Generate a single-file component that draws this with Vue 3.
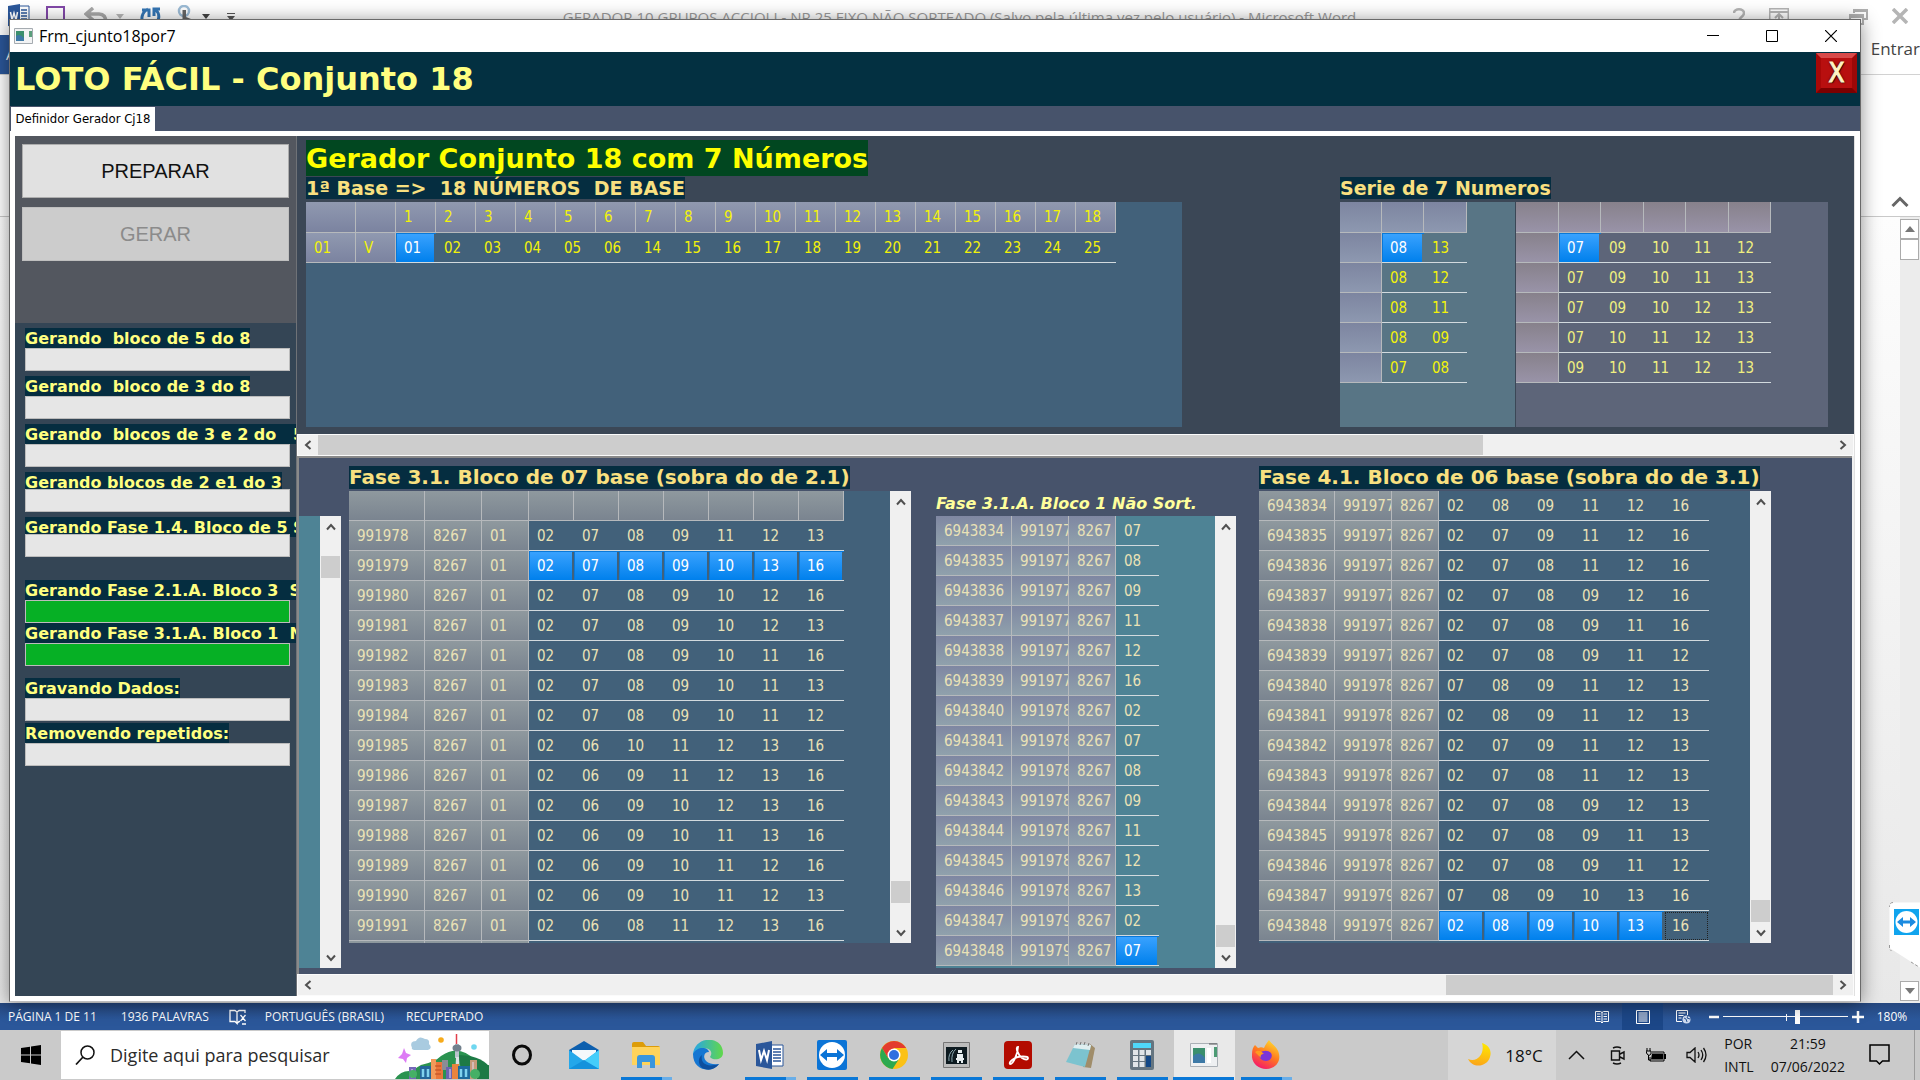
<script setup>
const baseTitle = '1ª Base =>  18 NÚMEROS  DE BASE'
const baseHead = ['', '', ...Array.from({ length: 18 }, (_, i) => String(i + 1))]
const baseRow = '01 02 03 04 05 06 14 15 16 17 18 19 20 21 22 23 24 25'.split(' ')

const split = (lines) => lines.map((line) => line.split(' '))

const pairs = split(['08 13', '08 12', '08 11', '08 09', '07 08'])
const quintets = split([
  '07 09 10 11 12',
  '07 09 10 11 13',
  '07 09 10 12 13',
  '07 10 11 12 13',
  '09 10 11 12 13',
])

const block7 = split([
  '02 07 08 09 11 12 13',
  '02 07 08 09 10 13 16',
  '02 07 08 09 10 12 16',
  '02 07 08 09 10 12 13',
  '02 07 08 09 10 11 16',
  '02 07 08 09 10 11 13',
  '02 07 08 09 10 11 12',
  '02 06 10 11 12 13 16',
  '02 06 09 11 12 13 16',
  '02 06 09 10 12 13 16',
  '02 06 09 10 11 13 16',
  '02 06 09 10 11 12 16',
  '02 06 09 10 11 12 13',
  '02 06 08 11 12 13 16',
]).map((cells, i) => ({ id: 991978 + i, cells }))

const parentOf = (i) => (i < 6 ? 991977 : i < 13 ? 991978 : 991979)

const block1 = '07 08 09 11 12 16 02 07 08 09 11 12 13 02 07'
  .split(' ')
  .map((cell, i) => ({ id: 6943834 + i, parent: parentOf(i), cell }))

const block6 = split([
  '02 08 09 11 12 16',
  '02 07 09 11 12 16',
  '02 07 08 11 12 16',
  '02 07 08 09 12 16',
  '02 07 08 09 11 16',
  '02 07 08 09 11 12',
  '07 08 09 11 12 13',
  '02 08 09 11 12 13',
  '02 07 09 11 12 13',
  '02 07 08 11 12 13',
  '02 07 08 09 12 13',
  '02 07 08 09 11 13',
  '02 07 08 09 11 12',
  '07 08 09 10 13 16',
  '02 08 09 10 13 16',
]).map((cells, i) => ({ id: 6943834 + i, parent: parentOf(i), cells }))

const groups = [
  {
    cls: 'spaced',
    fields: [
      { label: 'Gerando  bloco de 5 do 8', value: 0 },
      { label: 'Gerando  bloco de 3 do 8', value: 0 },
      { label: 'Gerando  blocos de 3 e 2 do   5', value: 0 },
      { label: 'Gerando blocos de 2 e1 do 3', value: 0, tight: true },
      { label: 'Gerando Fase 1.4. Bloco de 5 S', value: 0, tight: true },
    ],
  },
  {
    cls: 'joined',
    fields: [
      { label: 'Gerando Fase 2.1.A. Bloco 3  S', value: 100 },
      { label: 'Gerando Fase 3.1.A. Bloco 1  N', value: 100 },
    ],
  },
  {
    cls: 'final',
    fields: [
      { label: 'Gravando Dados:', value: 0 },
      { label: 'Removendo repetidos:', value: 0 },
    ],
  },
]
</script>

<template>
  <div class="desktop">
    <div class="word">
      <header class="word-title">
        <div class="quick">
          <svg width="22" height="24" viewBox="0 0 22 24"><path d="M10 2h11v20H10z" fill="#fff" stroke="#2b579a"/><path d="M13 6h6M13 9h6M13 12h6M13 15h6" stroke="#2b579a" stroke-width="1.5"/><path d="M0 2l12-2v24L0 22z" fill="#2b579a"/><path d="M2.500 8l1.500 8 2-7 2 7 1.500-8" fill="none" stroke="#fff" stroke-width="1.500"/></svg>
          <svg class="q-save" width="20" height="20" viewBox="0 0 20 20"><path d="M1 1h17v17H1z" fill="#fff" stroke="#8248a8" stroke-width="2"/><path d="M5 13h10v5H5z" fill="#8248a8"/></svg>
          <svg class="q-undo" width="24" height="20" viewBox="0 0 24 20"><path d="M9 1L2 7l7 6M3 7h12c5 0 7 4 7 9" fill="none" stroke="#a9a9a9" stroke-width="3.500"/></svg>
          <svg class="q-tri" width="8" height="5" viewBox="0 0 8 5"><path d="M0 0h8L4 5z" fill="#b9b9b9"/></svg>
          <svg class="q-redo" width="22" height="20" viewBox="0 0 22 20"><path d="M8 2C2 5 0 12 4 18M14 18c6-4 6-11 2-15M2 3h7v7M20 2h-6v7" fill="none" stroke="#3576b5" stroke-width="3"/></svg>
          <svg class="q-touch" width="16" height="20" viewBox="0 0 16 20"><circle cx="8" cy="6" r="5" fill="none" stroke="#9dbcd6" stroke-width="2.500"/><path d="M6.500 5h3.500v7l5 2v6H4l-4-5 2-1 4.500 2z" fill="#666"/></svg>
          <svg class="q-tri2" width="8" height="5" viewBox="0 0 8 5"><path d="M0 0h8L4 5z" fill="#444"/></svg>
          <svg class="q-more" width="8" height="8" viewBox="0 0 8 8"><path d="M0 .500h8" stroke="#555"/><path d="M0 3h8L4 8z" fill="#555"/></svg>
        </div>
        <span class="word-name">GERADOR 10 GRUPOS ACCIOLI - NR 25 FIXO NÃO SORTEADO (Salvo pela última vez pelo usuário) - Microsoft Word</span>
        <div class="word-ctl">
          <svg width="12" height="20" viewBox="0 0 12 20"><path d="M1 5c0-5 10-5 10 0 0 4-5 4-5 8M6 15v3" fill="none" stroke="#b5b5b5" stroke-width="2.500"/></svg>
          <svg width="20" height="16" viewBox="0 0 20 16"><path d="M.500.500h19v15H.500zM0 4h20M10 6v9M6 10l4-4 4 4" fill="none" stroke="#b5b5b5" stroke-width="2"/></svg>
          <svg class="w-restore" width="19" height="18" viewBox="0 0 19 18"><path d="M5 5V2h13v9h-4M1 7h13v9H1zM1 9h13M5 3h13" fill="none" stroke="#b0b0b0" stroke-width="2"/></svg>
          <svg width="16" height="16" viewBox="0 0 16 16"><path d="M1 1l14 14M15 1L1 15" stroke="#b5b5b5" stroke-width="3.500"/></svg>
        </div>
      </header>
      <div class="word-tabs">
        <button class="file-tab">ARQUIVO</button>
        <a href="#" class="signin">Entrar</a>
      </div>
      <div class="ribbon">
        <svg width="18" height="11" viewBox="0 0 18 11"><path d="M1.500 10L9 2.500 16.500 10" fill="none" stroke="#666" stroke-width="3"/></svg>
      </div>
      <div class="doc">
        <div class="doc-bar">
          <button aria-label="Rolar para cima"><svg width="10" height="6" viewBox="0 0 10 6"><path d="M0 6l5-6 5 6z" fill="#777"/></svg></button>
          <div class="doc-thumb"></div>
          <button class="doc-down" aria-label="Rolar para baixo"><svg width="10" height="6" viewBox="0 0 10 6"><path d="M0 0l5 6 5-6z" fill="#777"/></svg></button>
        </div>
      </div>
    </div>

    <div class="viewer-tab">
      <svg width="31" height="66" viewBox="0 0 31 66"><path d="M31 .500H5Q.500.500.500 5v41L31 65.500z" fill="#fff"/><path d="M4 .500Q.500.500.500 5M.500 43v4l2 2M22 60l8 5" fill="none" stroke="#999" stroke-dasharray="3 2"/><path d="M5 7h25v26H5z" fill="#10a4ee"/><circle cx="17.500" cy="20" r="11" fill="#fff"/><path d="M8 20l6-5v3.500h7V15l6 5-6 5v-3.500h-7V25z" fill="#1c8be0"/></svg>
    </div>

    <footer class="status">
      <span>PÁGINA 1 DE 11</span>
      <span class="s-words">1936 PALAVRAS</span>
      <svg width="18" height="16" viewBox="0 0 18 16"><path d="M8 14.500V3L6 1.500H1v11h5zm0 0l2-2h1M8 3l2-1.500h6V4M11.500 6l5 6m0-6l-5 6M13 15h4" fill="none" stroke="#fff" stroke-width="1.300"/></svg>
      <span class="s-lang">PORTUGUÊS (BRASIL)</span>
      <span>RECUPERADO</span>
      <div class="s-right">
        <button class="s-view" aria-label="Modo de leitura"><svg width="14" height="14" viewBox="0 0 14 14"><path d="M.500 1.500h5l1.500 1 1.500-1h5v10h-5L7 13l-1.500-1.500h-5zM7 2v11M2 4h3.500M2 6.500h3.500M2 9h3.500M8.500 4H12M8.500 6.500H12M8.500 9H12" fill="none" stroke="#fff"/></svg></button>
        <button class="s-view on" aria-label="Layout de impressão"><svg width="14" height="14" viewBox="0 0 14 14"><path d="M.500.500h13v13H.500zM2.500 3h9M2.500 5h9M2.500 7h9M2.500 9h9M2.500 11h9" fill="none" stroke="#fff"/></svg></button>
        <button class="s-view" aria-label="Layout da Web"><svg width="15" height="14" viewBox="0 0 15 14"><path d="M6 11.500H.500V.500h11V5M2.500 3h7M2.500 5.500h5M2.500 8h3" fill="none" stroke="#fff"/><circle cx="10.500" cy="9.500" r="4" fill="#cfdcf0"/><path d="M8 8l2 1 1 3M12 6l-1 2 3 1" stroke="#2b579a" fill="none"/></svg></button>
        <button class="s-step minus" aria-label="Diminuir zoom"><svg width="10" height="12" viewBox="0 0 10 12"><path d="M0 6h10" stroke="#fff" stroke-width="2.500"/></svg></button>
        <div class="zoom"><input type="range" min="0" max="100" value="60" aria-label="Zoom" /></div>
        <button class="s-step" aria-label="Aumentar zoom"><svg width="12" height="12" viewBox="0 0 12 12"><path d="M0 6h12M6 0v12" stroke="#fff" stroke-width="2.500"/></svg></button>
        <span class="s-pct">180%</span>
      </div>
    </footer>

    <nav class="taskbar">
      <button class="start" aria-label="Iniciar"><svg width="20" height="20" viewBox="0 0 20 20"><path d="M0 3l9-1.300v7.800H0zM10 1.500L20 0v9.500H10zM0 10.500h9v7.800L0 17zM10 10.500h10V20l-10-1.500z" fill="#000"/></svg></button>
      <div class="search">
        <svg class="lens" width="20" height="20" viewBox="0 0 20 20"><circle cx="12.500" cy="7.500" r="6.500" fill="none" stroke="#111" stroke-width="1.500"/><path d="M8 12L1 19.500" stroke="#111" stroke-width="1.700"/></svg>
        <input type="text" placeholder="Digite aqui para pesquisar" aria-label="Pesquisar" />
        <svg width="94" height="48" viewBox="0 0 94 48">
          <path d="M0 48q6-9 16-8l10-6q14-3 20-9 18-12 34 4 8 6 14 5v14z" fill="#2a9350"/>
          <path d="M62 24q22 0 32 11v13H70z" fill="#1d7a45"/>
          <path d="M17 17q-3-7 4-7 3-6 9-2 5 0 4 5 4 4-1 6H19q-3-1-2-2z" fill="#a9cbe0"/>
          <circle cx="46" cy="9" r="2.800" fill="#f7ab1b"/><circle cx="79" cy="16" r="2.800" fill="#6fd7f0"/>
          <path d="M9 17l2 5 5 2-4 3-1 5-3-4-5-1 4-4z" fill="#dd7bf5"/>
          <path d="M61.500 3v10" stroke="#e23f4a" stroke-width="1.500"/><path d="M60 13h4v14h-4z" fill="#b7c3cc"/><ellipse cx="62" cy="17" rx="4.500" ry="3.500" fill="#71808d"/><path d="M61 26h3l1 22h-5z" fill="#dbe2e6"/>
          <path d="M14 36h7v12h-7z" fill="#7567b8"/><path d="M25 35h12v13H25z" fill="#23669a"/><path d="M38 31h10v17H38z" fill="#e9763b"/><path d="M36 28h5v20h-5z" fill="#f29a5a"/><path d="M47 29h6v10h-6z" fill="#8a8d96"/><path d="M51 36h8v12h-8z" fill="#6a64b0"/><path d="M57 33h7v15h-7z" fill="#e8843f"/><path d="M63 35h12v13H63z" fill="#1d6a9c"/><path d="M75 29h7v19h-7z" fill="#c59a7a"/>
          <path d="M28 38v8M33 38v8M66 38v8M71 38v8" stroke="#7fd2ee" stroke-width="2.500"/><path d="M40 35h6M40 39h6M40 43h6" stroke="#b84b20"/><path d="M78 31v15M17 38v9M55 38v9" stroke="#e4dcf5"/>
          <circle cx="18" cy="43" r="4" fill="#45b066"/><circle cx="80" cy="43" r="5" fill="#45b066"/>
        </svg>
      </div>
      <ul class="apps">
        <li><svg width="20" height="22" viewBox="0 0 20 22"><ellipse cx="10" cy="11" rx="8.500" ry="9" fill="none" stroke="#0a0a0a" stroke-width="3"/></svg></li>
        <li><svg width="30" height="28" viewBox="0 0 30 28"><path d="M0 9L15 0l15 9v4H0z" fill="#0d5fae"/><path d="M3 9h24v10H3z" fill="#f4f8fb"/><path d="M0 9l15 11L30 9v19H0z" fill="#24a7ea"/><path d="M30 9v19L15 20z" fill="#45cdfa"/><path d="M0 28l15-9 15 9z" fill="#1492dc"/></svg></li>
        <li class="run more"><svg width="28" height="26" viewBox="0 0 28 26"><path d="M0 2q0-2 2-2h9l3 4h12q2 0 2 2v4H0z" fill="#dd9c08"/><path d="M0 5h28v18H0z" fill="#ffd35b"/><path d="M5 26V16q0-3 3-3h12q3 0 3 3v10h-5v-6h-8v6z" fill="#3a96dd"/></svg></li>
        <li><svg width="30" height="30" viewBox="0 0 30 30"><defs><linearGradient id="edge" x1="0" x2="1"><stop offset="0" stop-color="#28a5e8"/><stop offset="1" stop-color="#61d849"/></linearGradient></defs><path d="M0 15C1-5 30-5 30 13c0 7-10 8-13 4 4-6-2-10-7-8-4 1-8 3-10 6z" fill="url(#edge)"/><path d="M0 14c4-8 15-7 16-2-8 0-7 14 10 12-6 9-26 8-26-10z" fill="#1576d2"/><path d="M9 15c-2 8 4 13 17 9-5 7-13 7-18 3-3-4-3-9 1-12z" fill="#0e4f9e"/></svg></li>
        <li class="run more"><svg width="28" height="28" viewBox="0 0 28 28"><path d="M14 4h13v21H14z" fill="#fff" stroke="#2b579a"/><path d="M17 8h8M17 11h8M17 14h8M17 17h8M17 20h8" stroke="#2b579a" stroke-width="1.500"/><path d="M0 3l16-3v28L0 25z" fill="#2b579a"/><path d="M3 9l2 10 3-9 3 9 2-10" fill="none" stroke="#fff" stroke-width="2"/></svg></li>
        <li class="run"><svg width="30" height="30" viewBox="0 0 30 30"><rect width="30" height="30" rx="2" fill="#0b74d6"/><circle cx="15" cy="15" r="13" fill="#fff"/><path d="M3 15l7-6v4h10V9l7 6-7 6v-4H10v4z" fill="#0b74d6"/></svg></li>
        <li class="run"><svg width="28" height="28" viewBox="0 0 28 28"><circle cx="14" cy="14" r="14" fill="#fbc116"/><path d="M2 7a14 14 0 0 1 24.200 0H14l-6 10z" fill="#e33b2e"/><path d="M2 7a14 14 0 0 0 10.500 21L19 18 8 17z" fill="#2da94f"/><circle cx="14" cy="14" r="6.500" fill="#fff"/><circle cx="14" cy="14" r="5" fill="#2f6fe0"/></svg></li>
        <li class="run"><svg width="27" height="26" viewBox="0 0 27 26"><path d="M.500.500h26v25H.500z" fill="#bcbcbc" stroke="#777"/><path d="M3 5h21v17H3z" fill="#0d1a20"/><path d="M10 8q-5 4-4 11M13 7q-5 4-4 13" stroke="#89a7b0" fill="none"/><path d="M14 12h6v4h1v2h-1v3h-2v-2h-2v2h-2v-3h-1v-2h1zM15 8h4v3h-4z" fill="#e7eef0"/></svg></li>
        <li class="run"><svg width="28" height="28" viewBox="0 0 28 28"><rect width="28" height="28" rx="4" fill="#b30b00"/><path d="M14 6c-3 0 0 8 4 11 3 2 6 2 6 0s-9-2-13 0-6 5-5 6c3 1 8-11 8-17z" fill="none" stroke="#fff" stroke-width="1.800"/></svg></li>
        <li class="run"><svg width="29" height="28" viewBox="0 0 29 28"><path d="M24 3l5 4-4 20-8-1z" fill="#a08d6a"/><path d="M9 3l16 1-6 22L0 21z" fill="#7cc3cf"/><path d="M9 3l16 1-1 5L7 7z" fill="#dfeef0"/><path d="M10 4l1-3M14 4l1-3M18 4l1-3M22 5l1-3" stroke="#777"/></svg></li>
        <li class="run"><svg width="24" height="30" viewBox="0 0 24 30"><rect width="24" height="30" rx="2" fill="#657580"/><path d="M3 3h18v5H3z" fill="#4fd8fb"/><path d="M3 10h5v5H3zM9.500 10h5v5h-5zM16 10h5v5h-5zM3 16h5v5H3zM9.500 16h5v5h-5zM3 22h5v5H3zM9.500 22h5v5h-5z" fill="#e0e5e8"/><path d="M16 16h5v11h-5z" fill="#124887"/></svg></li>
        <li class="run active"><svg width="28" height="24" viewBox="0 0 28 24"><path d="M.500.500h27v23H.500z" fill="#eef0f2" stroke="#aab0b6"/><path d="M3 5h12v15H3z" fill="#3b8f6d"/><path d="M3 13q6-6 12 2v5H3z" fill="#3d79a6"/><path d="M17 5h4v15h-4z" fill="#fff"/><path d="M24 4h3v10h-3z" fill="#4c9b74"/><path d="M19 1h8" stroke="#555"/></svg></li>
        <li class="run more"><svg width="28" height="30" viewBox="0 0 28 30"><defs><linearGradient id="fox" x1=".8" y1="0" x2=".3" y2="1"><stop offset="0" stop-color="#ffe02e"/><stop offset=".5" stop-color="#ff7a1f"/><stop offset="1" stop-color="#f5156c"/></linearGradient></defs><path d="M17 0c2 4 9 7 10 14 2 9-5 15-13 15S-1 23 0 14c0-4 1-7 3-9l3 3c3-1 4-1 6 0 1-3 3-5 5-8z" fill="url(#fox)"/><path d="M8 13c3-3 8-3 11 0 2 3 0 8-5 8s-8-4-6-8z" fill="#7b35d8"/><path d="M3 12c4-3 7 0 9 2-3 0-4 2-3 4z" fill="#ff9a1f"/></svg></li>
      </ul>
      <div class="tray">
        <div class="weather">
          <svg width="24" height="24" viewBox="0 0 24 24"><defs><linearGradient id="moon" x1=".7" y1="0" x2=".5" y2="1"><stop offset="0" stop-color="#ffe800"/><stop offset="1" stop-color="#fba61a"/></linearGradient></defs><path d="M14 0c7 2 10 8 8 14-3 10-17 12-22 2 10 4 17-6 14-16z" fill="url(#moon)"/></svg>
          <span>18°C</span>
        </div>
        <svg class="t-up" width="17" height="10" viewBox="0 0 17 10"><path d="M1 9l7.500-7.500L16 9" fill="none" stroke="#111" stroke-width="1.500"/></svg>
        <svg class="t-cam" width="15" height="19" viewBox="0 0 15 19"><path d="M1.500 5h8v9h-8zM10 8l4-2v7l-4-2M3 2q4-2 8 0M3 17q4 2 8 0" fill="none" stroke="#111" stroke-width="1.400"/></svg>
        <svg class="t-bat" width="20" height="14" viewBox="0 0 20 14"><path d="M6 4h12v9H4V9" fill="none" stroke="#000"/><path d="M6 5.500h11v6H5zM18 6h2v5h-2z"/><path d="M1 0v3M4 0v3M0 3h5v3q-2 3-4 0zM2.500 7v5H5" fill="none" stroke="#000"/></svg>
        <svg class="t-vol" width="21" height="16" viewBox="0 0 21 16"><path d="M1 5.500h3l5-4.500v14l-5-4.500H1zM12 5q2 3 0 6M15 3q3.500 5 0 10M17.500 1q5 7 0 14" fill="none" stroke="#111" stroke-width="1.300"/></svg>
        <div class="stack lang"><span>POR</span><span>INTL</span></div>
        <div class="stack clock"><span>21:59</span><span>07/06/2022</span></div>
        <svg class="t-note" width="21" height="22" viewBox="0 0 21 22"><path d="M1 1h19v16h-6.500L10.500 20l-3-3H1z" fill="none" stroke="#000" stroke-width="1.500"/></svg>
        <div class="peek"></div>
      </div>
    </nav>

    <main class="window">
      <div class="caption">
        <svg width="19" height="16" viewBox="0 0 19 16"><path d="M.500.500h18v15H.500z" fill="#f2f3f4" stroke="#a5abb0"/><path d="M2 3h8v10H2z" fill="#3b8f6d"/><path d="M2 8q4-3 8 2v3H2z" fill="#3d79a6"/><path d="M15 3h3v6h-3z" fill="#5b9f7c"/></svg>
        <span>Frm_cjunto18por7</span>
        <div class="caption-ctl">
          <button aria-label="Minimizar"><svg width="12" height="12" viewBox="0 0 12 12"><path d="M0 5.500h12" stroke="#000"/></svg></button>
          <button aria-label="Maximizar"><svg width="12" height="12" viewBox="0 0 12 12"><path d="M.500.500h11v11H.500z" fill="none" stroke="#000"/></svg></button>
          <button aria-label="Fechar"><svg width="12" height="12" viewBox="0 0 12 12"><path d="M0 0l12 12M12 0L0 12" stroke="#000" stroke-width="1.200"/></svg></button>
        </div>
      </div>
      <div class="banner">
        <h1>LOTO FÁCIL - Conjunto 18</h1>
        <button class="exit">X</button>
      </div>
      <div class="tabs"><button class="tab">Definidor Gerador Cj18</button></div>

      <div class="body">
        <aside class="side">
          <div class="actions">
            <button>PREPARAR</button>
            <button disabled>GERAR</button>
          </div>
          <div v-for="(group, g) in groups" :key="g" class="group" :class="group.cls">
            <div v-for="(field, f) in group.fields" :key="f" class="field" :class="{ tight: field.tight }">
              <label :for="`p${g}-${f}`">{{ field.label }}</label>
              <progress :id="`p${g}-${f}`" :value="field.value" max="100"></progress>
            </div>
          </div>
        </aside>

        <div class="panes">
          <section class="upper">
            <div class="base">
              <h2 class="green">Gerador Conjunto 18 com 7 Números</h2>
              <h3 class="base-title">{{ baseTitle }}</h3>
              <div class="grid-box steel">
                <table class="g-base">
                  <colgroup><col class="c50" /><col v-for="n in 19" :key="n" class="c40" /></colgroup>
                  <thead><tr><th v-for="(h, i) in baseHead" :key="i">{{ h }}</th></tr></thead>
                  <tbody>
                    <tr><th>01</th><th>V</th><td v-for="(c, i) in baseRow" :key="c" :class="{ sel: i === 0 }">{{ c }}</td></tr>
                  </tbody>
                </table>
              </div>
            </div>
            <div class="series">
              <h3 class="series-title">Serie de 7 Numeros</h3>
              <div class="series-row">
                <div class="grid-box pair-box">
                  <table class="g-pair">
                    <colgroup><col class="c42" /><col class="c42" /><col class="c43" /></colgroup>
                    <thead><tr><th v-for="n in 3" :key="n"></th></tr></thead>
                    <tbody>
                      <tr v-for="(r, i) in pairs" :key="i"><th></th><td v-for="(c, j) in r" :key="j" :class="{ sel: i === 0 && j === 0 }">{{ c }}</td></tr>
                    </tbody>
                  </table>
                </div>
                <div class="grid-box quint-box">
                  <table class="g-quint">
                    <colgroup><col class="c43" /><col class="c42" /><col class="c43" /><col class="c42" /><col class="c43" /><col class="c42" /></colgroup>
                    <thead><tr><th v-for="n in 6" :key="n"></th></tr></thead>
                    <tbody>
                      <tr v-for="(r, i) in quintets" :key="i"><th></th><td v-for="(c, j) in r" :key="j" :class="{ sel: i === 0 && j === 0 }">{{ c }}</td></tr>
                    </tbody>
                  </table>
                </div>
              </div>
            </div>
          </section>

          <div class="hbar">
            <button aria-label="Esquerda"><svg width="8" height="10" viewBox="0 0 8 10"><path d="M6.500 1L2 5l4.500 4" fill="none" stroke="#505050" stroke-width="2"/></svg></button>
            <i class="thumb wide"></i><i class="rest wide"></i>
            <button aria-label="Direita"><svg width="8" height="10" viewBox="0 0 8 10"><path d="M1.500 1L6 5 1.500 9" fill="none" stroke="#505050" stroke-width="2"/></svg></button>
          </div>

          <section class="lower">
            <div class="strip">
              <div class="teal-bit"></div>
              <div class="vbar">
                <button aria-label="Cima"><svg width="10" height="8" viewBox="0 0 10 8"><path d="M1 6.500L5 2l4 4.500" fill="none" stroke="#505050" stroke-width="2"/></svg></button>
                <i :style="{ flexGrow: 5 }"></i><i class="thumb"></i><i :style="{ flexGrow: 95 }"></i>
                <button aria-label="Baixo"><svg width="10" height="8" viewBox="0 0 10 8"><path d="M1 1.500L5 6l4-4.500" fill="none" stroke="#505050" stroke-width="2"/></svg></button>
              </div>
            </div>

            <div class="block seven">
              <h3 class="block-title">Fase 3.1. Bloco de 07 base (sobra do de 2.1)</h3>
              <div class="framed">
                <div class="grid-box steel">
                  <table class="g-grey">
                    <colgroup><col class="c76" /><col class="c57" /><col class="c47" /><col v-for="n in 7" :key="n" class="c45" /></colgroup>
                    <tbody>
                      <tr><th v-for="n in 10" :key="n"></th></tr>
                      <tr v-for="(r, i) in block7" :key="r.id"><th>{{ r.id }}</th><th>8267</th><th>01</th><td v-for="(c, j) in r.cells" :key="j" :class="{ sel: i === 1 }">{{ c }}</td></tr>
                      <tr><th></th><th></th><th></th><td v-for="n in 7" :key="n"></td></tr>
                    </tbody>
                  </table>
                </div>
                <div class="vbar">
                  <button aria-label="Cima"><svg width="10" height="8" viewBox="0 0 10 8"><path d="M1 6.500L5 2l4 4.500" fill="none" stroke="#505050" stroke-width="2"/></svg></button>
                  <i :style="{ flexGrow: 95 }"></i><i class="thumb"></i><i :style="{ flexGrow: 5 }"></i>
                  <button aria-label="Baixo"><svg width="10" height="8" viewBox="0 0 10 8"><path d="M1 1.500L5 6l4-4.500" fill="none" stroke="#505050" stroke-width="2"/></svg></button>
                </div>
              </div>
            </div>

            <div class="block one">
              <h3 class="slanted">Fase 3.1.A. Bloco 1 Não Sort.</h3>
              <div class="framed">
                <div class="grid-box teal">
                  <table class="g-blue">
                    <colgroup><col class="c76" /><col class="c57" /><col class="c47" /><col class="c43" /></colgroup>
                    <tbody>
                      <tr v-for="(r, i) in block1" :key="r.id"><th>{{ r.id }}</th><th>{{ r.parent }}</th><th>8267</th><td :class="{ sel: i === 14 }">{{ r.cell }}</td></tr>
                    </tbody>
                  </table>
                </div>
                <div class="vbar">
                  <button aria-label="Cima"><svg width="10" height="8" viewBox="0 0 10 8"><path d="M1 6.500L5 2l4 4.500" fill="none" stroke="#505050" stroke-width="2"/></svg></button>
                  <i :style="{ flexGrow: 100 }"></i><i class="thumb"></i>
                  <button aria-label="Baixo"><svg width="10" height="8" viewBox="0 0 10 8"><path d="M1 1.500L5 6l4-4.500" fill="none" stroke="#505050" stroke-width="2"/></svg></button>
                </div>
              </div>
            </div>

            <div class="block six">
              <h3 class="block-title">Fase 4.1. Bloco de 06 base (sobra do de 3.1)</h3>
              <div class="framed">
                <div class="grid-box steel">
                  <table class="g-grey">
                    <colgroup><col class="c76" /><col class="c57" /><col class="c47" /><col v-for="n in 6" :key="n" class="c45" /></colgroup>
                    <tbody>
                      <tr v-for="(r, i) in block6" :key="r.id"><th>{{ r.id }}</th><th>{{ r.parent }}</th><th>8267</th><td v-for="(c, j) in r.cells" :key="j" :class="{ sel: i === 14 && j < 5, focus: i === 14 && j === 5 }">{{ c }}</td></tr>
                    </tbody>
                  </table>
                </div>
                <div class="vbar">
                  <button aria-label="Cima"><svg width="10" height="8" viewBox="0 0 10 8"><path d="M1 6.500L5 2l4 4.500" fill="none" stroke="#505050" stroke-width="2"/></svg></button>
                  <i :style="{ flexGrow: 100 }"></i><i class="thumb"></i>
                  <button aria-label="Baixo"><svg width="10" height="8" viewBox="0 0 10 8"><path d="M1 1.500L5 6l4-4.500" fill="none" stroke="#505050" stroke-width="2"/></svg></button>
                </div>
              </div>
            </div>
          </section>

          <div class="hbar">
            <button aria-label="Esquerda"><svg width="8" height="10" viewBox="0 0 8 10"><path d="M6.500 1L2 5l4.500 4" fill="none" stroke="#505050" stroke-width="2"/></svg></button>
            <i class="rest far"></i><i class="thumb far"></i>
            <button aria-label="Direita"><svg width="8" height="10" viewBox="0 0 8 10"><path d="M1.500 1L6 5 1.500 9" fill="none" stroke="#505050" stroke-width="2"/></svg></button>
          </div>
        </div>
      </div>
    </main>
  </div>
</template>

<style>
html, body { margin: 0; }
body { overflow: hidden; }
</style>

<style scoped>
* { box-sizing: border-box; }
button { border: 0; padding: 0; background: none; font: inherit; color: inherit; display: flex; align-items: center; justify-content: center; flex: none; }
svg { display: block; flex: none; }
h1, h2, h3, ul { margin: 0; padding: 0; }
.desktop { position: relative; display: flex; flex-direction: column; width: 100%; min-height: 100vh; font-family: "Open Sans", "Noto Sans", sans-serif; overflow: hidden; }

/* Word behind the form */
.word { flex: 1; display: flex; flex-direction: column; background: #fff; }
.word-title { height: 35px; display: flex; align-items: flex-start; justify-content: space-between; padding: 4px 13px 0 8px; }
.quick { display: flex; align-items: flex-start; width: 240px; }
.q-save { margin: 2px 0 0 16px; }
.q-undo { margin: 3px 0 0 18px; }
.q-tri { margin: 10px 0 0 8px; }
.q-redo { margin: 3px 0 0 16px; }
.q-touch { margin: 1px 0 0 14px; }
.q-tri2 { margin: 10px 0 0 10px; }
.q-more { margin: 9px 0 0 17px; }
.word-name { font-size: 15px; line-height: 20px; margin: 3px 62px 0 0; color: #9a9a9a; white-space: nowrap; }
.word-ctl { display: flex; align-items: flex-start; gap: 24px; padding-top: 4px; width: 174px; }
.w-restore { margin-left: 36px; }
.word-tabs { height: 40px; display: flex; justify-content: space-between; border-bottom: 1px solid #d2d2d2; }
.file-tab { width: 80px; background: #2b579a; color: #fff; font-size: 14px; justify-content: flex-start; padding-left: 6px; }
.signin { color: #444; font-size: 17px; line-height: 28px; text-decoration: none; }
.ribbon { height: 142px; display: flex; align-items: flex-end; justify-content: flex-end; padding: 0 11px 9px 0; border-bottom: 1px solid #c9c9c9; }
.doc { flex: 1; display: flex; justify-content: flex-end; background: linear-gradient(#fdfdfd, #e8e8e8); }
.doc-bar { width: 20px; display: flex; flex-direction: column; padding: 2px 1px 2px 0; background: #ececec; }
.doc-bar button, .doc-thumb { height: 20px; flex: none; background: #fff; border: 1px solid #ababab; }
.doc-thumb { height: 21px; }
.doc-bar .doc-down { margin-top: auto; }
.viewer-tab { position: absolute; right: 0; bottom: 112px; z-index: 3; }

.status { height: 27px; display: flex; align-items: center; padding-left: 8px; background: linear-gradient(#26487f, #2b579a 60%); color: #fff; font-size: 12px; white-space: nowrap; }
.s-words { margin: 0 20px 0 24px; }
.s-lang { margin: 0 22px 0 18px; }
.s-right { margin-left: auto; display: flex; align-items: center; height: 27px; }
.s-view { width: 41px; height: 27px; }
.s-view.on { background: #1c4788; }
.minus { margin-left: 5px; }
.zoom { position: relative; width: 125px; margin: 0 4px; display: flex; }
.zoom::before { content: ""; position: absolute; left: 50%; top: 4px; width: 1px; height: 7px; background: #fff; }
.zoom input { appearance: none; width: 100%; height: 14px; margin: 0; background: linear-gradient(#fff, #fff) center / 100% 1px no-repeat; }
.zoom input::-webkit-slider-thumb { appearance: none; width: 5px; height: 14px; background: #fff; }
.s-pct { width: 56px; text-align: center; }

.taskbar { height: 50px; display: flex; background: #cacaca; color: #111; }
.start { width: 61px; }
.search { width: 428px; height: 48px; margin: 1px 2px 0 0; display: flex; align-items: center; background: #fff; flex: none; }
.lens { margin-left: 14px; }
.search input { flex: 1; min-width: 0; border: 0; outline: 0; padding: 0 0 0 15px; font: 18px "Open Sans", "Noto Sans", sans-serif; background: none; }
.search input::placeholder { color: #2b2b2b; opacity: 1; }
.apps { display: flex; list-style: none; }
.apps li { width: 62px; position: relative; display: flex; align-items: center; justify-content: center; }
.apps .run::after { content: ""; position: absolute; left: 6px; right: 5px; bottom: 0; height: 3px; background: #0a78d7; }
.apps .more::after { background: linear-gradient(90deg, #0a78d7 80%, #69aee8 80%); }
.apps .active { background: linear-gradient(#e9e9e9, #e9e9e9) 50% 0 / 61px 50px no-repeat; }
.apps .active::after { left: 0; right: 1px; }
.tray { margin-left: auto; display: flex; align-items: center; }
.weather { width: 108px; height: 50px; padding-left: 20px; display: flex; align-items: center; gap: 13px; background: #d6d6d6; font-size: 17px; }
.t-up { margin-left: 12px; }
.t-cam { margin-left: 25px; }
.t-bat { margin-left: 21px; }
.t-vol { margin-left: 20px; }
.stack { display: flex; flex-direction: column; align-items: center; font-size: 14px; line-height: 23px; }
.lang { margin-left: 17px; align-items: flex-start; }
.clock { margin-left: 17px; }
.t-note { margin-left: 24px; }
.peek { width: 6px; height: 50px; margin-left: 24px; border-left: 1px solid #9c9c9c; }

/* Form window */
.window { position: absolute; left: 9px; right: 59px; top: 19px; bottom: 78px; display: flex; flex-direction: column; background: #fff; border: 1px solid #6a6a6a; border-bottom-color: #bdbdbd; box-shadow: 0 2px 18px rgba(0, 0, 0, .45); font-family: "DejaVu Sans Condensed", "Noto Sans", sans-serif; }
.caption { height: 32px; flex: none; display: flex; align-items: center; padding-left: 4px; gap: 6px; font: 16px "Open Sans", "Noto Sans", sans-serif; color: #000; }
.caption-ctl { margin-left: auto; display: flex; height: 32px; }
.caption-ctl button { width: 59px; }
.banner { height: 54px; flex: none; display: flex; justify-content: space-between; background: #033041; padding: 1px 3px 0 5px; }
h1 { font: bold 32px/52px "DejaVu Sans", sans-serif; color: #ffff80; }
.exit { width: 41px; height: 40px; background: #b80f0f; border: 5px solid; border-color: #d84a4a #9c0808 #7c0000 #a80808; color: #fff3c4; font-size: 26px; -webkit-text-stroke: 1px #fff3c4; text-shadow: 0 0 3px #000, 1px 1px 1px #000; }
.tabs { height: 25px; flex: none; background: #47536b; padding: 1px 0 0 1px; }
.tab { height: 24px; width: 144px; background: #fff; font-size: 13px; padding-bottom: 1px; color: #000; }
.body { flex: 1; min-height: 0; display: flex; margin: 5px; border-right: 1px solid #e0e0e0; }

.side { width: 282px; flex: none; background: #344555; overflow: hidden; border-right: 1px solid #6f7277; }
.actions { height: 187px; background: #53575f; padding: 8px 7px; display: flex; flex-direction: column; gap: 9px; }
.actions button { height: 54px; background: #e1e1e1; border: 1px solid #adadad; font: 20px "Liberation Sans", sans-serif; color: #111; }
.actions button:disabled { background: #ccc; border-color: #bfbfbf; color: #8b8b8b; }
.group { display: flex; flex-direction: column; padding: 0 6px 0 10px; }
.spaced { gap: 5px; padding-top: 5px; }
.joined { padding-top: 23px; }
.final { gap: 2px; padding-top: 12px; }
.field { display: flex; flex-direction: column; align-items: flex-start; }
.field label { height: 20px; font: bold 16px/21px "DejaVu Sans", sans-serif; color: #ffff80; white-space: pre; background: #052d40; }
.tight label { margin-bottom: -3px; }
progress { appearance: none; position: relative; display: block; width: 100%; height: 23px; background: #e6e6e6; border: 1px solid #bcbcbc; }
progress::-webkit-progress-bar { background: #e6e6e6; }
progress::-webkit-progress-value { background: #06b025; }

.panes { flex: 1; min-width: 0; display: flex; flex-direction: column; background: #f0f0f0; }
.upper { height: 298px; display: flex; justify-content: space-between; background: #3b4756; padding: 4px 26px 0 9px; }
.green { width: max-content; padding-top: 2px; font: bold 27px/34px "DejaVu Sans", sans-serif; color: #ff0; background: #014720; }
h3 { width: max-content; font: bold 19px/22px "DejaVu Sans", sans-serif; color: #f8e080; background: #052d40; white-space: pre; }
.base-title { margin: 1px 0 3px; }
.series-title { margin: 37px 0 3px; }
.block-title { font-size: 20px; line-height: 23px; margin-bottom: 2px; }
.slanted { font-size: 16px; line-height: 20px; font-style: italic; background: none; color: #ffff9c; margin-bottom: 2px; }
.grid-box { overflow: hidden; flex: none; }
.steel { background: #42617a; }
.teal { background: #4e8395; }
.base .grid-box { width: 876px; height: 225px; }
.series-row { display: flex; gap: 1px; }
.series-row .grid-box { height: 225px; }
.pair-box { width: 175px; background: #587585; }
.quint-box { width: 312px; background: #5d6579; }

table { table-layout: fixed; border-collapse: separate; border-spacing: 0; width: 0; font-size: 15px; line-height: 20px; }
.c40 { width: 40px; } .c42 { width: 42px; } .c43 { width: 43px; } .c45 { width: 45px; } .c47 { width: 47px; } .c50 { width: 50px; } .c57 { width: 57px; } .c76 { width: 76px; }
th, td { height: 30px; padding: 0 0 0 8px; font-weight: normal; text-align: left; white-space: nowrap; overflow: hidden; border-bottom: 1px solid #d2dade; }
th { border-right: 1px solid #b6b9bc; border-bottom-color: #b6b9bc; }
thead th { height: 31px; }
.g-base, .g-pair { color: #f2f20a; }
.g-quint { color: #f0f080; }
.g-grey, .g-blue { color: #eae2b6; }
.g-base th { background: linear-gradient(#9099b0, #7b83a0); }
.g-pair th { background: linear-gradient(#7d85a0, #8d98b0); }
.g-quint th { background: linear-gradient(#87818b, #9993a8); }
.g-grey th { background: linear-gradient(#8f999e, #7a8490); }
.g-blue th { background: linear-gradient(#7f87a2, #90a1ac); }
td.sel { color: #fff; background: linear-gradient(#3ba3ff, #0080ec) 0 0 / calc(100% - 2px) 100% no-repeat; box-shadow: inset 1px 1px #0a78d7; }
td.focus { outline: 1px dotted #222; outline-offset: -2px; }

.hbar { height: 22px; flex: none; display: flex; background: #f0f0f0; border: 1px solid #fbfbfb; }
.hbar button { width: 20px; }
.thumb { background: #cdcdcd; }
.thumb.wide { flex: 1167; } .rest.wide { flex: 350; }
.thumb.far { flex: 386; } .rest.far { flex: 1126; }
.lower { flex: 1; min-height: 0; display: flex; align-items: flex-start; background: #47536b; border: solid #8a8a8a; border-width: 2px 0 0 2px; padding-top: 8px; margin-right: 2px; }
.strip { display: flex; height: 452px; margin-top: 50px; }
.teal-bit { width: 21px; background: #4e8395; }
.vbar { width: 21px; height: 452px; flex: none; display: flex; flex-direction: column; background: #f0f0f0; }
.vbar button { height: 21px; }
.vbar .thumb { height: 22px; margin: 0 1px; }
.framed { display: flex; }
.framed .grid-box { height: 452px; }
.seven { width: 562px; margin-left: 8px; }
.seven .grid-box { width: 541px; }
.one { margin: 28px 0 0 25px; }
.one .grid-box { width: 279px; }
.six { width: 512px; margin-left: 23px; }
.six .grid-box { width: 491px; }
</style>
